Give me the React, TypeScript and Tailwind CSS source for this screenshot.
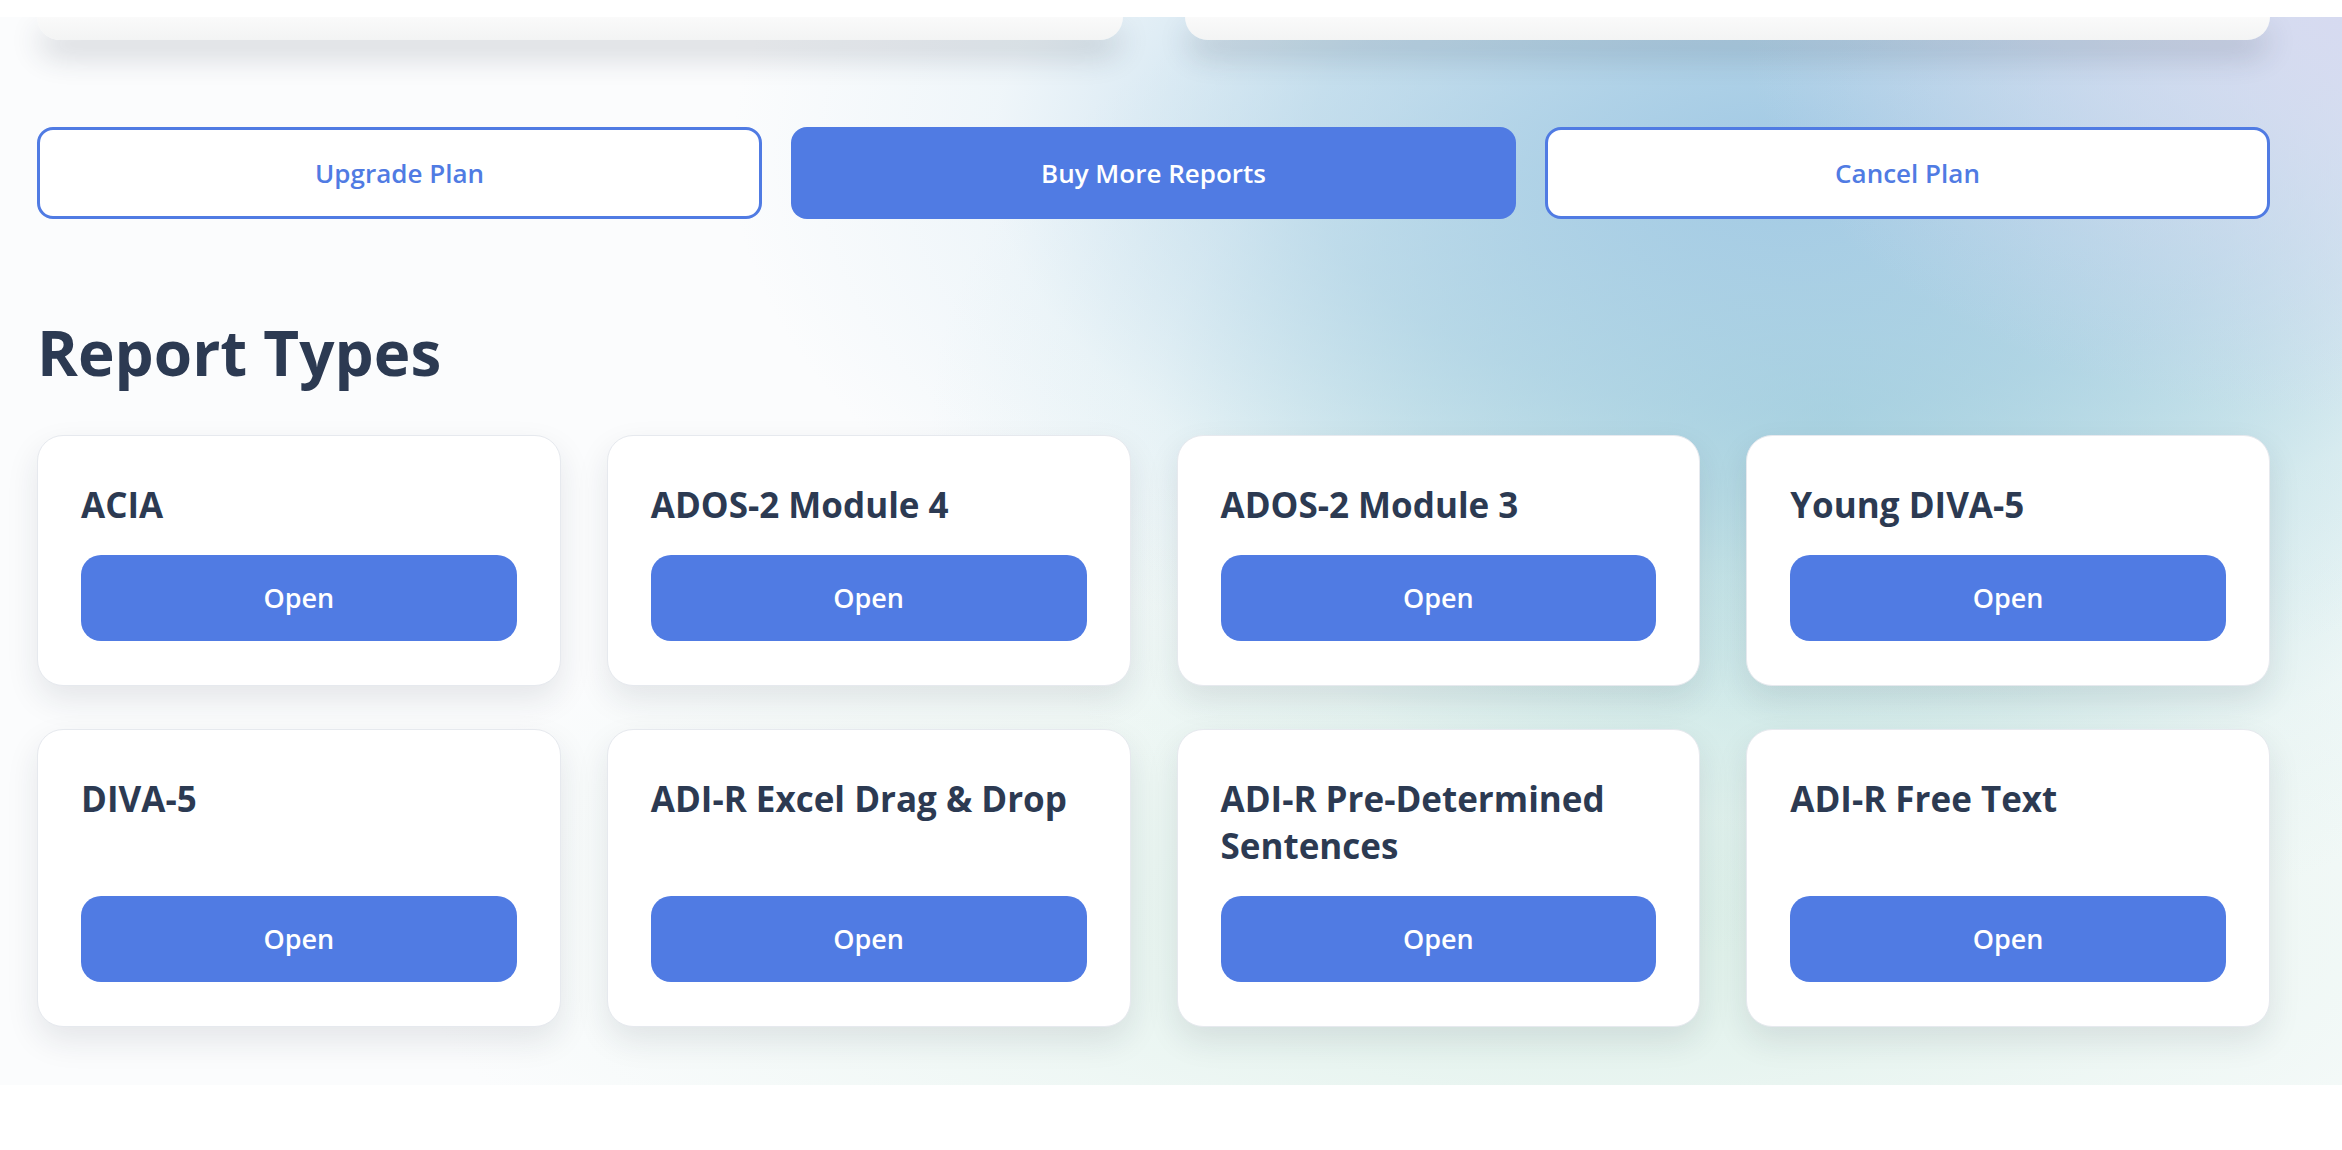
import React from "react";

const reportTypes = [
  "ACIA",
  "ADOS-2 Module 4",
  "ADOS-2 Module 3",
  "Young DIVA-5",
  "DIVA-5",
  "ADI-R Excel Drag & Drop",
  "ADI-R Pre-Determined Sentences",
  "ADI-R Free Text",
];

function ReportCard({ title }: { title: string }) {
  return (
    <div className="flex flex-col rounded-[26px] border border-[#e6e9ee] bg-white px-[43px] pt-[45px] pb-[44px] shadow-[0_14px_32px_rgba(30,40,60,0.1)]">
      <h3 className="mb-[27px] text-[35px] font-bold leading-[47px] text-[#2c3a52]">
        {title}
      </h3>
      <button className="mt-auto h-[86px] w-full rounded-[20px] bg-[#507be3] text-[27px] font-semibold text-white">
        Open
      </button>
    </div>
  );
}

export default function App() {
  return (
    <div className="min-h-screen bg-white font-['Segoe_UI','Open_Sans',sans-serif]">
      <div className="relative z-10 h-[17px] bg-white" />

      <section className="bg-[#fbfcfd] bg-[radial-gradient(ellipse_600px_400px_at_2342px_0px,rgba(214,218,240,1)_0%,rgba(214,218,240,0.5)_50%,transparent_100%),radial-gradient(ellipse_1050px_560px_at_1780px_140px,rgba(160,200,228,0.95)_0%,rgba(165,204,228,0.6)_45%,rgba(190,220,236,0.2)_75%,transparent_100%),radial-gradient(ellipse_900px_540px_at_1830px_400px,rgba(168,214,218,0.95)_0%,rgba(175,218,220,0.55)_45%,rgba(200,230,230,0.2)_75%,transparent_100%),radial-gradient(ellipse_1200px_460px_at_1600px_900px,rgba(214,237,228,0.85)_0%,rgba(220,240,232,0.4)_55%,transparent_100%)] pb-[58px] pl-[37px] pr-[72px]">
        {/* plan cards, scrolled mostly out of view */}
        <div className="grid grid-cols-2 gap-[62px]">
          <div className="h-[23px] rounded-b-[32px] bg-gradient-to-b from-[#fafafa] to-[#f3f4f4] shadow-[0_16px_30px_rgba(40,50,70,0.2)]" />
          <div className="h-[23px] rounded-b-[32px] bg-gradient-to-b from-[#fafafa] to-[#f3f4f4] shadow-[0_16px_30px_rgba(40,50,70,0.2)]" />
        </div>

        <div className="mt-[87px] grid grid-cols-3 gap-[29px]">
          <button className="h-[92px] rounded-[16px] border-[3px] border-[#507be3] bg-white text-[26px] font-semibold text-[#507be3]">
            Upgrade Plan
          </button>
          <button className="h-[92px] rounded-[16px] bg-[#507be3] text-[26px] font-semibold text-white">
            Buy More Reports
          </button>
          <button className="h-[92px] rounded-[16px] border-[3px] border-[#507be3] bg-white text-[26px] font-semibold text-[#507be3]">
            Cancel Plan
          </button>
        </div>

        <h2 className="mt-[95px] mb-[44px] text-[62px] font-bold leading-[77px] text-[#2c3a52]">
          Report Types
        </h2>

        <div className="grid grid-cols-4 gap-x-[46px] gap-y-[43px]">
          {reportTypes.map((t) => (
            <ReportCard key={t} title={t} />
          ))}
        </div>
      </section>
    </div>
  );
}
